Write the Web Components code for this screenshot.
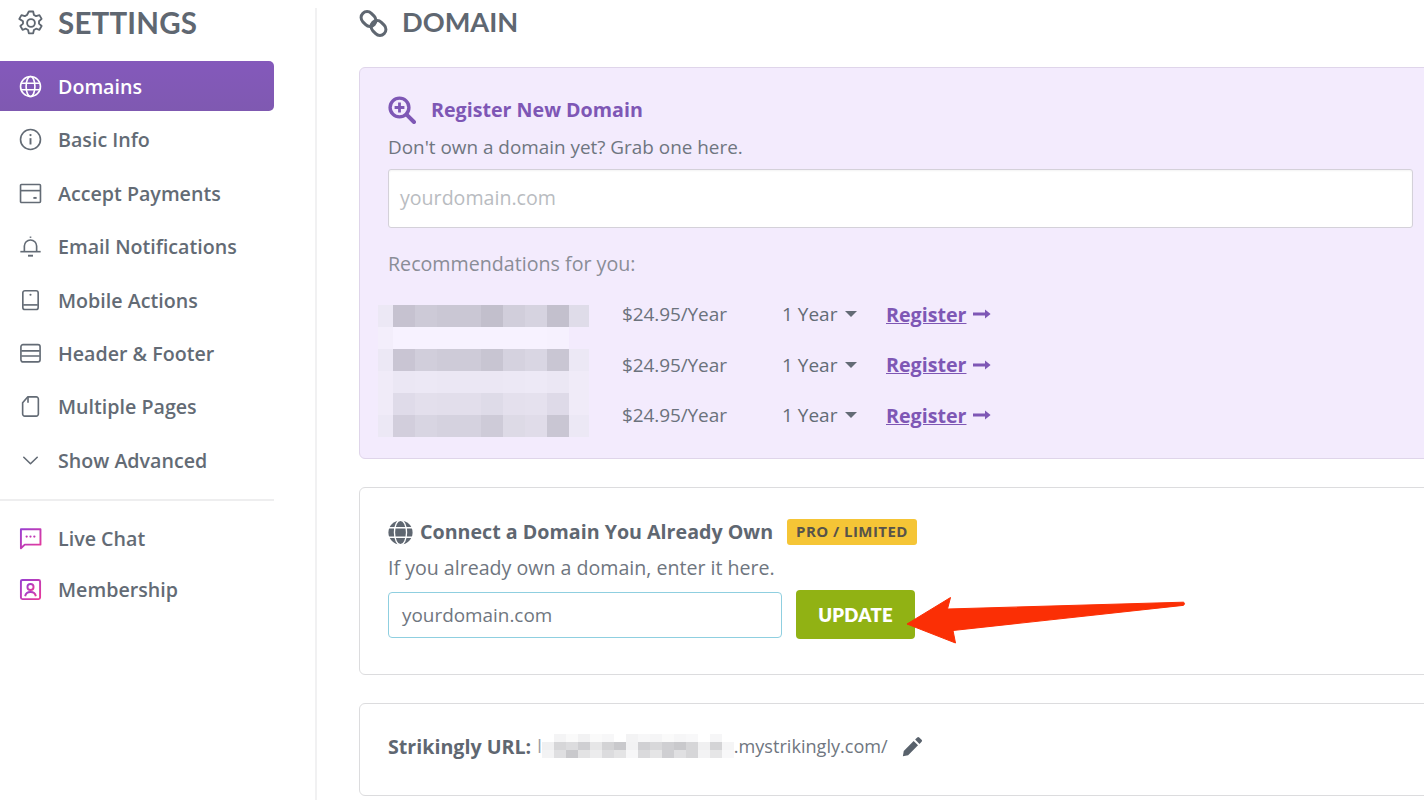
<!DOCTYPE html>
<html>
<head>
<meta charset="utf-8">
<title>Settings - Domain</title>
<style>
  html, body { margin: 0; height: 100%; overflow: hidden; background: #fff; }
  body { font-family: "Open Sans", "Liberation Sans", sans-serif; color: #636b75; }
</style>
</head>
<body>
<settings-page>
  <settings-sidebar slot="side">
    <nav-item icon="globe" active>Domains</nav-item>
    <nav-item icon="info">Basic Info</nav-item>
    <nav-item icon="card">Accept Payments</nav-item>
    <nav-item icon="bell">Email Notifications</nav-item>
    <nav-item icon="mobile">Mobile Actions</nav-item>
    <nav-item icon="layout">Header &amp; Footer</nav-item>
    <nav-item icon="page">Multiple Pages</nav-item>
    <nav-item icon="chevron">Show Advanced</nav-item>
    <nav-item slot="extra" icon="chat" short>Live Chat</nav-item>
    <nav-item slot="extra" icon="member" short>Membership</nav-item>
  </settings-sidebar>
  <domain-panel slot="main"></domain-panel>
</settings-page>

<script>
const ICONS = {
  gear: `<circle cx="12" cy="12" r="3.600"/><path d="M10 1.400h4l.7 3.200 2 1.100 3.100-1 2 3.500-2.400 2.200v2.200l2.400 2.200-2 3.500-3.100-1-2 1.100-.7 3.200h-4l-.7-3.200-2-1.100-3.100 1-2-3.500 2.400-2.200v-2.200L1.200 8.200l2-3.500 3.100 1 2-1.100z" stroke-linejoin="round"/>`,
  globe: `<circle cx="12" cy="12" r="10.400"/><ellipse cx="12" cy="12" rx="4.600" ry="10.400"/><path d="M2 8.600h20M2 15.400h20"/>`,
  info: `<circle cx="12" cy="12" r="10.400"/><path d="M12 10.600v6.600" stroke-width="2"/><circle cx="12" cy="7.400" r="1.200" fill="currentColor" stroke="none"/>`,
  card: `<rect x="1.600" y="2.600" width="20.800" height="18.800" rx="1"/><path d="M2 9h20"/><path d="M15 16.600h3.400" stroke-width="2"/>`,
  bell: `<path d="M5.600 17v-5.400a6.400 6.400 0 0 1 12.800 0V17"/><path d="M1.400 17.400h21.200"/><path d="M12 3V1.600"/><path d="M9.400 21.600h5.200" stroke-width="2"/>`,
  mobile: `<rect x="4" y="1.800" width="16" height="19.600" rx="2.200"/><path d="M4.400 16.600h15.200"/><circle cx="12" cy="6" r="1.100" fill="currentColor" stroke="none"/>`,
  layout: `<rect x="2" y="2.800" width="20" height="18" rx="2.200"/><path d="M2.400 9.200h19.200M2.400 14.600h19.200"/>`,
  page: `<path d="M9 2h9a2.200 2.200 0 0 1 2.200 2.200v15.600A2.200 2.200 0 0 1 18 22H6a2.200 2.200 0 0 1-2.200-2.200V8z" stroke-linejoin="round"/><path d="M9.400 2v6"/>`,
  chevron: `<path d="M5 8.600l7 6.800 7-6.800" stroke-linecap="round" stroke-linejoin="round"/>`,
  chat: `<path d="M2 2.400h20.400v16H6l-4 3.800z" stroke="url(#brand)" stroke-width="2" stroke-linejoin="round"/><g fill="url(#brand)" stroke="none"><circle cx="8" cy="10" r="1.200"/><circle cx="12" cy="10" r="1.200"/><circle cx="16" cy="10" r="1.200"/></g>`,
  member: `<rect x="2" y="2" width="20" height="20" rx="1.600" stroke="url(#brand)" stroke-width="2"/><circle cx="12" cy="9.400" r="3.200" stroke="url(#brand)" stroke-width="2"/><path d="M6.400 19c.6-3 2.800-4.400 5.600-4.400s5 1.400 5.600 4.400" stroke="url(#brand)" stroke-width="2"/>`
};

function iconSvg(name, size) {
  return `<svg width="${size}" height="${size}" viewBox="0 0 24 24" fill="none" stroke="currentColor" stroke-width="1.700" aria-hidden="true">
    <defs><linearGradient id="brand" x1="0" y1="0" x2="1" y2="1"><stop offset="0" stop-color="#9a3fd0"/><stop offset="1" stop-color="#e8399a"/></linearGradient></defs>
    ${ICONS[name]}</svg>`;
}

class SettingsPage extends HTMLElement {
  constructor() {
    super();
    this.attachShadow({ mode: "open" }).innerHTML = `
      <style>
        :host { display: grid; grid-template-columns: 359px 1fr; height: 800px; overflow: hidden; }
        main { min-width: 0; overflow: hidden; }
      </style>
      <slot name="side"></slot>
      <main><slot name="main"></slot></main>`;
  }
}
customElements.define("settings-page", SettingsPage);

class SettingsSidebar extends HTMLElement {
  constructor() {
    super();
    this.attachShadow({ mode: "open" }).innerHTML = `
      <style>
        :host { display: block; width: 317px; box-sizing: border-box; height: 792px; margin-top: 8px; border-right: 2px solid #f1f1f2; }
        h1 { display: flex; align-items: center; height: 30px; margin: 0 0 21.300px; padding-left: 18px; gap: 14px; color: #5f6771;
             font: 700 29.500px/30px Lato, "Liberation Sans", sans-serif; letter-spacing: .2px; }
        svg { flex: none; }
        .list { width: 274px; }
        hr { border: 0; border-top: 2px solid #eeeeef; margin: 12.700px 0 11px; }
      </style>
      <h1>${iconSvg("gear", 26)}<span>SETTINGS</span></h1>
      <div class="list">
        <slot></slot>
        <hr>
        <slot name="extra"></slot>
      </div>`;
  }
}
customElements.define("settings-sidebar", SettingsSidebar);

class NavItem extends HTMLElement {
  constructor() {
    super();
    this.attachShadow({ mode: "open" }).innerHTML = `
      <style>
        :host { display: flex; align-items: center; height: 53.400px; color: #636b75; }
        :host([short]) { height: 51px; }
        .row { flex: 1; display: flex; align-items: center; gap: 16px; height: 50px; box-sizing: border-box; padding: 2px 0 0 19px; border-radius: 0 5px 5px 0;
               font: 600 19.650px/24px "Open Sans", "Liberation Sans", sans-serif; }
        :host([active]) .row { background: linear-gradient(#8459bb, #7f59b1); color: #fff; }
        svg { flex: none; margin-top: -1px; }
      </style>
      <div class="row">${iconSvg(this.getAttribute("icon"), 23)}<span><slot></slot></span></div>`;
  }
}
customElements.define("nav-item", NavItem);

class PanelCard extends HTMLElement {
  constructor() {
    super();
    this.attachShadow({ mode: "open" }).innerHTML = `
      <style>
        :host { display: block; width: 1082px; box-sizing: border-box; padding: 0 28px; border: 1px solid #dcdcde; border-radius: 6px; background: #fff; }
        :host([tint]) { background: #f3ebfd; border-color: #dfd5ea; }
      </style>
      <slot></slot>`;
  }
}
customElements.define("panel-card", PanelCard);

// pixelated block standing in for the censored domain names
class BlurBlock extends HTMLElement {
  constructor() {
    super();
    const rows = JSON.parse(this.getAttribute("rows"));
    const size = Number(this.getAttribute("size"));
    const cols = this.getAttribute("cols");
    const cells = rows.flat().map((c) => `<i style="background:${c}"></i>`).join("");
    this.attachShadow({ mode: "open" }).innerHTML = `
      <style>
        :host { display: grid; grid-template-columns: ${cols}; grid-auto-rows: ${size}px; }
        i { display: block; }
      </style>${cells}`;
  }
}
customElements.define("blur-block", BlurBlock);

class RecRow extends HTMLElement {
  constructor() {
    super();
    this.attachShadow({ mode: "open" }).innerHTML = `
      <style>
        :host { display: grid; grid-template-columns: 160px 104px auto; align-items: center; height: 50.500px; font-size: 19px; color: #6b727c; }
        .price { letter-spacing: -.1px; }
        .term { display: flex; align-items: center; gap: 8px; color: #636b75; }
        .term i { width: 0; height: 0; border: 6px solid transparent; border-top: 6px solid #636b75; border-bottom: 0; }
        a { display: inline-flex; align-items: center; gap: 7px; color: #7e57b5; font-size: 19.650px; font-weight: 700; text-decoration: none; }
        a span { text-decoration: underline; }
      </style>
      <span class="price">$24.95/Year</span>
      <span class="term">1 Year <i></i></span>
      <a href="#"><span>Register</span>
        <svg width="18" height="10" viewBox="0 0 18 10"><path d="M0 3.600h12V0.600L17.600 5 12 9.400V6.400H0z" fill="#7e57b5"/></svg></a>`;
  }
}
customElements.define("rec-row", RecRow);

class DomainPanel extends HTMLElement {
  constructor() {
    super();
    const a = ["#ece8f5","#c6c2d0","#cdcad7","#cac7d4","#cac7d4","#c2bfcc","#d1cedb","#d6d3e0","#c3c0cd","#dfdce9"];
    const b = ["#f3eefb","#f7f2ff","#f7f2ff","#f7f2ff","#f7f2ff","#f7f2ff","#f7f2ff","#f7f2ff","#f6f1fe","#f3ebfd"];
    const c = ["#ece8f5","#c9c5d3","#d1cedb","#cecbd8","#cecbd8","#c8c5d2","#d5d2df","#d9d6e3","#c9c6d3","#ece8f5"];
    const d = ["#f0ebf8","#ebe7f4","#ece8f5","#ebe7f4","#ebe7f4","#ebe7f4","#ece8f5","#ede9f6","#ebe7f4","#f0ebf8"];
    const e = ["#f0ebf8","#dfdbe9","#e3dfec","#e2deeb","#e2deeb","#dedbe8","#e4e0ed","#e5e1ee","#dedae8","#f0ebf8"];
    const f = ["#ece8f5","#d2cedc","#d8d5e2","#d5d2df","#d5d2df","#cecbd8","#dddae6","#e0dce9","#c9c6d3","#ece8f5"];
    const u1 = ["#fff","#f4f4f5","#fafafa","#f2f2f3","#fafafa","#f7f7f8","#fff","#f3f3f4","#f7f7f8","#f5f5f6","#fafafa","#f6f6f7","#f8f8f9","#fff","#f6f6f7","#fff"];
    const u2 = ["#f0f0f1","#d6d6d8","#dcdcde","#cfcfd2","#e6e6e7","#d3d3d5","#c9c9cc","#f2f2f3","#d0d0d3","#d8d8da","#cfcfd2","#c9c9cc","#d6d6d8","#f0f0f1","#d4d4d6","#f5f5f6"];
    const u3 = ["#f3f3f4","#dfdfe1","#c9c9cc","#e3e3e4","#ececed","#dcdcde","#e4e4e5","#f7f7f8","#dadadc","#e5e5e6","#cfcfd2","#e0e0e2","#d6d6d8","#f3f3f4","#e6e6e7","#f8f8f9"];
    this.attachShadow({ mode: "open" }).innerHTML = `
      <style>
        :host { display: block; font-family: "Open Sans", "Liberation Sans", sans-serif; position: relative; height: 800px; }
        h2 { display: flex; align-items: center; gap: 14px; height: 30px; margin: 7px 0 30px; color: #5f6771;
             font: 700 27.200px/30px Lato, "Liberation Sans", sans-serif; }
        panel-card + panel-card { margin-top: 28px; }
        .reg { height: 392px; }
        .con { height: 188px; }
        .url { height: 93px; }
        .title { display: flex; align-items: center; font-size: 19.650px; line-height: 28px; font-weight: 700; }
        .reg .title { padding-top: 28px; color: #7e57b5; gap: 15px; }
        .con .title { padding-top: 30px; color: #5f6771; gap: 7px; }
        .badge { margin-left: 7px; padding: 0 9px; height: 26px; line-height: 25px; border-radius: 3px; background: #f5c536; color: #57534a;
                 font-size: 15px; font-weight: 700; letter-spacing: .45px; }
        p { margin: 0; font-size: 18.900px; line-height: 28px; color: #6f7680; }
        .reg p.sub { margin-top: 9px; }
        .field { display: flex; align-items: center; box-sizing: border-box; background: #fff; border: 1px solid #d4d1d9; border-radius: 3px;
                 font-size: 19.600px; color: #b9bcc1; padding: 0 0 2px 11px; }
        .reg .field { height: 59px; width: 1025px; margin-top: 8px; box-shadow: inset 0 1px 2px rgba(0,0,0,.05); }
        .reg .hint { margin-top: 22px; color: #8a8d97; font-size: 19.650px; }
        .recs { position: relative; margin-top: 11px; padding-left: 234px; }
        blur-block.names { position: absolute; left: -10px; top: 16px; }
        .form { display: flex; align-items: center; gap: 14px; margin-top: 8px; }
        .con .sub { margin-top: 8px; font-size: 19.600px; }
        .con .field { width: 394px; height: 46px; border-color: #8fcfe0; border-radius: 4px; color: #6f7680; padding: 0 0 0 13px; font-size: 18.900px; }
        button { width: 119px; height: 49px; border: 0; border-radius: 4px; background: #91b214; color: #fff; padding: 0;
                 font: 800 18.500px Lato, "Liberation Sans", sans-serif; letter-spacing: .3px; }
        .line { display: flex; align-items: center; padding-top: 28px; height: 28px; font-size: 18.100px; color: #6f7680; }
        .line b { color: #5f6771; margin-right: 6px; font-size: 19.650px; }
        .line .masked { flex: none; width: 192px; }
        .line svg { margin-left: 14px; }
        .arrow { position: absolute; left: 545px; top: 586px; }
      </style>
      <h2>
        <svg width="29" height="30" viewBox="0 0 29 30" fill="none" stroke="#5f6771" stroke-width="3">
          <rect x="1.500" y="6" width="16" height="12" rx="6" transform="rotate(45 9.500 12)"/>
          <rect x="11.500" y="15" width="16" height="12" rx="6" transform="rotate(45 19.500 21)"/>
        </svg>
        <span>DOMAIN</span>
      </h2>

      <panel-card class="reg" tint>
        <div class="title">
          <svg width="28" height="28" viewBox="0 0 28 28" fill="none" stroke="#7e57b5">
            <circle cx="11.500" cy="11.500" r="9.400" stroke-width="3.400"/>
            <path d="M18.600 18.600L26 26" stroke-width="4" stroke-linecap="round"/>
            <path d="M11.500 6.600v9.800M6.600 11.500h9.800" stroke-width="2.800"/>
          </svg>
          <span>Register New Domain</span>
        </div>
        <p class="sub">Don't own a domain yet? Grab one here.</p>
        <div class="field">yourdomain.com</div>
        <p class="hint">Recommendations for you:</p>
        <div class="recs">
          <blur-block class="names" size="22" cols="15px repeat(8, 22px) 20px" rows='${JSON.stringify([a,b,c,d,e,f])}'></blur-block>
          <rec-row></rec-row>
          <rec-row></rec-row>
          <rec-row></rec-row>
        </div>
      </panel-card>

      <panel-card class="con">
        <div class="title">
          <svg width="25" height="25" viewBox="0 0 24 24" fill="none">
            <circle cx="12" cy="12" r="11.600" fill="#5f6771"/>
            <g stroke="#fff" stroke-width="1.300">
              <ellipse cx="12" cy="12" rx="5.800" ry="11.800"/>
              <path d="M0 7.400h24M0 16.600h24"/>
            </g>
          </svg>
          <span>Connect a Domain You Already Own</span>
          <span class="badge">PRO / LIMITED</span>
        </div>
        <p class="sub">If you already own a domain, enter it here.</p>
        <div class="form">
          <div class="field">yourdomain.com</div>
          <button>UPDATE</button>
        </div>
      </panel-card>

      <panel-card class="url">
        <div class="line">
          <b>Strikingly URL:</b><span style="color:#9a9ea5">l</span>
          <blur-block class="masked" size="8" cols="repeat(16, 12px)" rows='${JSON.stringify([u1,u2,u3])}'></blur-block>
          <span>.mystrikingly.com/</span>
          <svg width="21" height="21" viewBox="0 0 24 24" fill="#59626c"><path d="M17.400 1.600a1.600 1.600 0 0 1 2.300 0l2.700 2.700a1.600 1.600 0 0 1 0 2.300l-2.400 2.400-5-5zM13.300 5.700l5 5L7 22 1 23l1-6z"/></svg>
        </div>
      </panel-card>

      <svg class="arrow" width="290" height="60" viewBox="0 0 290 60">
        <path d="M3 31L46.500 4.500 43.500 16 279 9.200c2 0 2 2.800 0 3.200L49 37.500 51.500 50z" fill="#fb2f05" stroke="#fb2f05" stroke-linejoin="round"/>
      </svg>`;
  }
}
customElements.define("domain-panel", DomainPanel);
</script>
</body>
</html>
